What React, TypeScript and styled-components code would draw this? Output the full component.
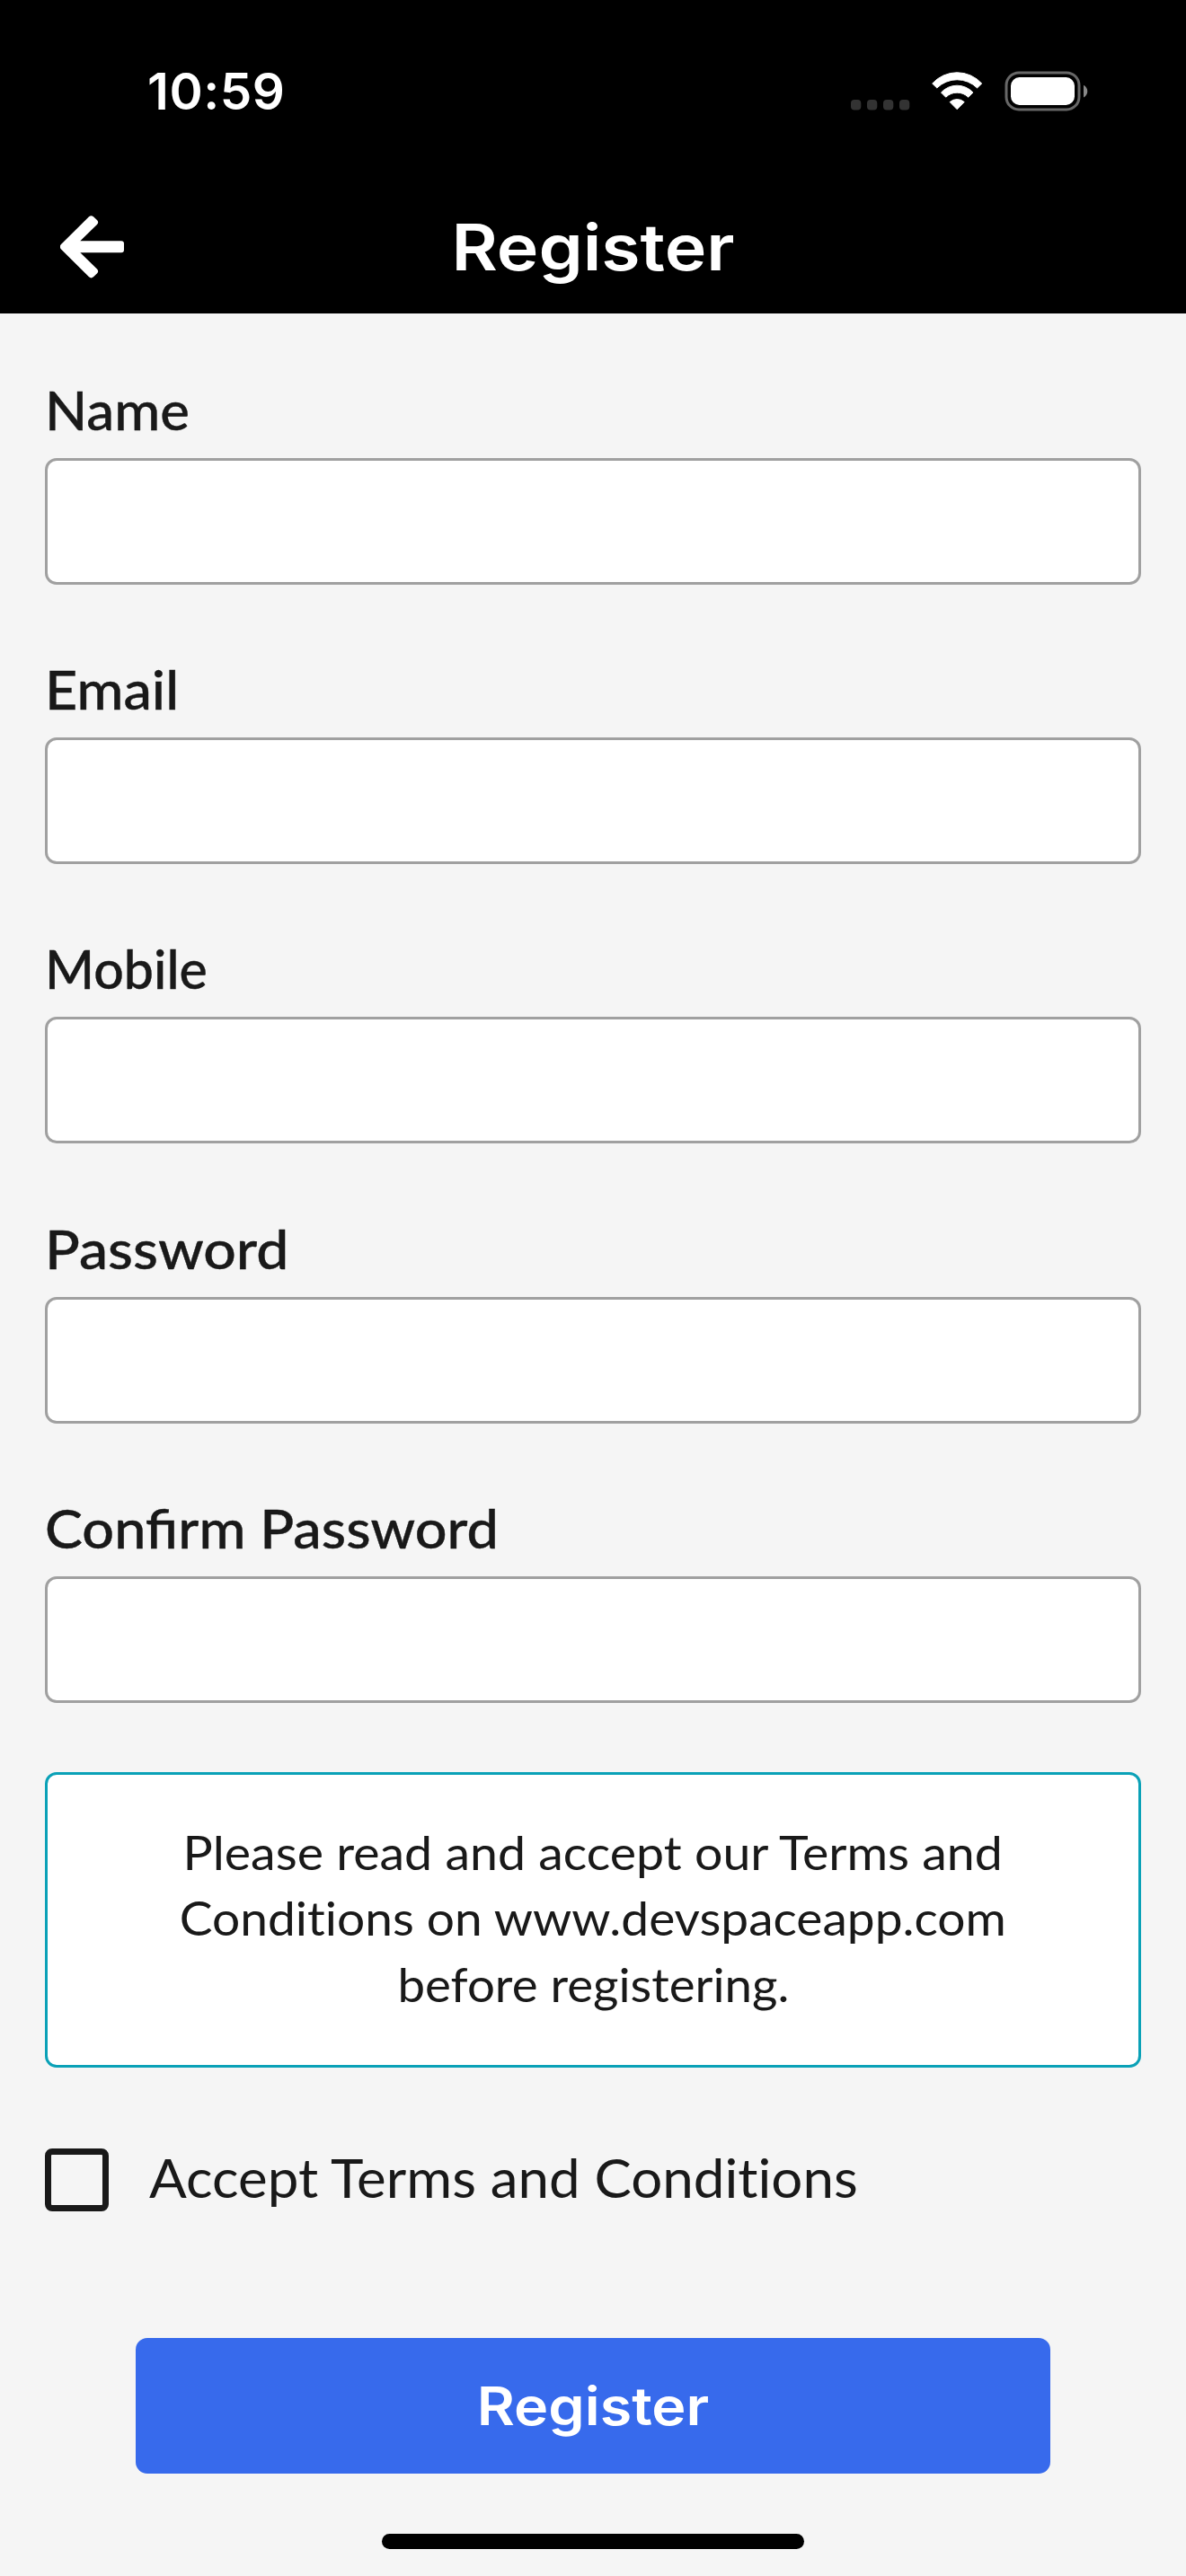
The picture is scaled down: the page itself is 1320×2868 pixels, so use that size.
import React, { useState } from "react";
import styled, { createGlobalStyle } from "styled-components";

const GlobalStyle = createGlobalStyle`
  * { box-sizing: border-box; }
  body { margin: 0; background: #f5f5f5; }
`;

const Screen = styled.div`
  display: flex;
  flex-direction: column;
  width: 1320px;
  height: 2868px;
  background: #f5f5f5;
  color: #191919;
  font-family: Lato, "Open Sans", sans-serif;
`;

const Header = styled.header`
  display: flex;
  flex-direction: column;
  height: 349px;
  background: #000;
  color: #fff;
  font-family: Inter, "Liberation Sans", sans-serif;
  font-weight: 600;
`;

const StatusBar = styled.div`
  display: flex;
  align-items: center;
  justify-content: space-between;
  height: 203px;
  padding: 0 105px 0 164px;
`;

const Clock = styled.span`
  font-size: 56.5px;
  line-height: 68px;
  letter-spacing: 0.5px;
`;

const NavBar = styled.div`
  display: grid;
  grid-template-columns: 1fr auto 1fr;
  align-items: center;
  height: 144px;
  padding: 0 67px;
`;

const BackButton = styled.button`
  display: flex;
  width: 72px;
  padding: 0;
  border: 0;
  background: none;
`;

const Title = styled.h1`
  margin: 0;
  font-size: 71px;
  font-weight: 600;
  line-height: 86px;
  transform: scaleX(1.11);
`;

const Form = styled.form`
  display: flex;
  flex-direction: column;
  flex: 1;
  padding: 71px 50px 0;
`;

const Field = styled.div`
  display: flex;
  flex-direction: column;
  height: 311.2px;
`;

const Label = styled.label<{ $stretch: number }>`
  align-self: flex-start;
  margin-bottom: 18px;
  font-size: 60px;
  font-weight: 500;
  line-height: 72px;
  white-space: nowrap;
  -webkit-text-stroke: 0.4px #191919;
  transform: scaleX(${(p) => p.$stretch});
  transform-origin: left;
`;

const Input = styled.input`
  width: 100%;
  height: 141px;
  padding: 0 32px;
  border: 3px solid #a0a0a0;
  border-radius: 13px;
  outline: none;
  background: #fff;
  font: 400 54px Lato, sans-serif;
`;

const Notice = styled.section`
  display: flex;
  flex-direction: column;
  align-items: center;
  height: 329px;
  margin-top: -3px;
  padding-top: 49px;
  border: 3px solid #0aa1b7;
  border-radius: 13px;
  background: #fff;
`;

const NoticeLine = styled.span<{ $stretch: number }>`
  font-size: 53px;
  line-height: 73.3px;
  font-variant-ligatures: none;
  white-space: nowrap;
  transform: scaleX(${(p) => p.$stretch});
`;

const ConsentRow = styled.label`
  display: flex;
  align-items: center;
  gap: 45px;
  height: 70px;
  margin-top: 90px;
`;

const Checkbox = styled.input`
  appearance: none;
  width: 71px;
  height: 70px;
  margin: 0;
  border: 7px solid #191919;
  border-radius: 8px;
  &:checked { background: #191919; }
`;

const ConsentText = styled.span<{ $stretch: number }>`
  padding-bottom: 5px;
  font-size: 60px;
  line-height: 72px;
  font-variant-ligatures: none;
  white-space: nowrap;
  transform: scaleX(${(p) => p.$stretch});
  transform-origin: left;
`;

const Submit = styled.button`
  align-self: center;
  width: 1018px;
  height: 151px;
  margin-top: 141px;
  padding: 0;
  border: 0;
  border-radius: 13px;
  background: #376aec;
  color: #fff;
  font: 600 58.5px Inter, "Liberation Sans", sans-serif;
`;

const SubmitText = styled.span`
  display: inline-block;
  transform: scaleX(1.105);
`;

const HomeBar = styled.div`
  align-self: center;
  width: 470px;
  height: 17px;
  margin-bottom: 30px;
  border-radius: 9px;
  background: #000;
`;

const StatusIcons = () => (
  <svg width="275" height="52" viewBox="940 75.6 275 52">
    <g fill="#333">
      {[947, 965, 983, 1001].map((x) => (
        <rect key={x} x={x} y="110.5" width="11.3" height="11.5" rx="4" />
      ))}
    </g>
    <g fill="#fff" stroke="#fff" strokeWidth="1" strokeLinejoin="round">
      <path d="M1037.7 92.6A37 37 0 0 1 1092.7 92.6L1087.6 97.5A32 32 0 0 0 1042.8 97.5Z" />
      <path d="M1047.5 102.6A24 24 0 0 1 1082.9 102.6L1077.7 107.8A18 18 0 0 0 1052.7 107.8Z" />
      <path d="M1057.2 113.2A12 12 0 0 1 1073.2 113.2L1065.2 121.3Z" />
    </g>
    <rect x="1120" y="80.5" width="81" height="41" rx="14" fill="none" stroke="#676767" strokeWidth="3" />
    <rect x="1125" y="85.7" width="71" height="30.8" rx="9.5" fill="#fff" />
    <path d="M1206 94.3C1211.7 97 1211.7 105.4 1206 108Z" fill="#888" />
  </svg>
);

const ArrowLeft = () => (
  <svg width="72" height="70" viewBox="67 240.5 72 70">
    <path
      fill="#fff"
      d="M99 241.8Q101.5 239.6 104 241.8L108 245.6Q110.4 248 108 250.5L89.3 268.7H135Q138 268.7 138 271.7V278.7Q138 281.7 135 281.7H89.3L108 300Q110.4 302.5 108 305L104 308.8Q101.5 311 99 308.8L68 278Q65.5 275.3 68 272.5Z"
    />
  </svg>
);

const fields = [
  { name: "Name", type: "text", stretch: 1.029 },
  { name: "Email", type: "email", stretch: 1.048 },
  { name: "Mobile", type: "tel", stretch: 0.985 },
  { name: "Password", type: "password", stretch: 1.072 },
  { name: "Confirm Password", type: "password", stretch: 1.049 },
];

const notice = [
  { text: "Please read and accept our Terms and", stretch: 1.047 },
  { text: "Conditions on www.devspaceapp.com", stretch: 1.039 },
  { text: "before registering.", stretch: 1.031 },
];

export default function App() {
  const [accepted, setAccepted] = useState(false);
  return (
    <>
      <GlobalStyle />
      <Screen>
        <Header>
          <StatusBar>
            <Clock>10:59</Clock>
            <StatusIcons />
          </StatusBar>
          <NavBar>
            <BackButton type="button" aria-label="Back">
              <ArrowLeft />
            </BackButton>
            <Title>Register</Title>
          </NavBar>
        </Header>
        <Form onSubmit={(e) => e.preventDefault()}>
          {fields.map((f) => (
            <Field key={f.name}>
              <Label htmlFor={f.name} $stretch={f.stretch}>
                {f.name}
              </Label>
              <Input id={f.name} type={f.type} />
            </Field>
          ))}
          <Notice>
            {notice.map((l) => (
              <NoticeLine key={l.text} $stretch={l.stretch}>
                {l.text}
              </NoticeLine>
            ))}
          </Notice>
          <ConsentRow>
            <Checkbox
              type="checkbox"
              checked={accepted}
              onChange={(e) => setAccepted(e.target.checked)}
            />
            <ConsentText $stretch={1.031}>Accept Terms and Conditions</ConsentText>
          </ConsentRow>
          <Submit type="submit">
            <SubmitText>Register</SubmitText>
          </Submit>
        </Form>
        <HomeBar />
      </Screen>
    </>
  );
}
